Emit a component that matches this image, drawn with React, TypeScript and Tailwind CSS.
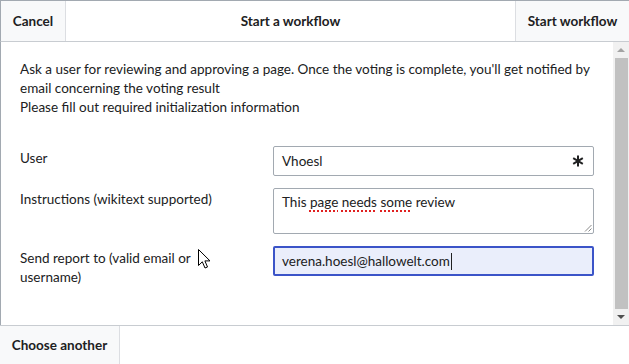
import React from "react";

export default function App() {
  const font = { fontFamily: "Lato, 'Noto Sans', sans-serif" };
  return (
    <div
      className="w-[629px] h-[364px] bg-white text-[13.5px] text-[#202122] flex flex-col overflow-hidden relative"
      style={font}
    >
      {/* header */}
      <div className="h-[42px] flex border-t border-l border-b border-t-[#a2a9b1] border-l-[#a2a9b1] border-b-[#c8ccd1] shrink-0">
        <div className="w-[65px] bg-[#f8f9fa] border-r border-[#dcdee2] flex items-center justify-center font-bold">
          Cancel
        </div>
        <div className="flex-1 flex items-center justify-center font-bold">
          Start a workflow
        </div>
        <div className="w-[114px] bg-[#f8f9fa] border-l border-[#dcdee2] flex items-center justify-center font-bold">
          Start workflow
        </div>
      </div>

      {/* body */}
      <div className="flex-1 flex border-l border-[#a2a9b1] min-h-0">
        <div className="flex-1 pl-[19px] pr-[16px] pt-[18px]">
          <p className="leading-[19px]">
            Ask a user for reviewing and approving a page. Once the voting is complete, you'll get notified by email concerning the voting result
            <br />
            Please fill out required initialization information
          </p>

          <div className="mt-[29px] flex flex-col gap-[12px]">
            <div className="flex">
              <div className="w-[253px] pt-[3px] leading-[19px]">User</div>
              <div className="w-[321px] h-[30px] border border-[#a2a9b1] rounded-[2px] flex items-center pl-[8px] pr-[8px] justify-between">
                <span>Vhoesl</span>
                <svg width="12" height="12" viewBox="0 0 12 12" className="mr-[1px]">
                  <g stroke="#202122" strokeWidth="2" strokeLinecap="butt">
                    <line x1="6" y1="0.5" x2="6" y2="11.5" />
                    <line x1="1.2" y1="3.2" x2="10.8" y2="8.8" />
                    <line x1="1.2" y1="8.8" x2="10.8" y2="3.2" />
                  </g>
                </svg>
              </div>
            </div>
            <div className="flex">
              <div className="w-[253px] pt-[2px] leading-[19px]">Instructions (wikitext supported)</div>
              <div className="w-[321px] h-[46px] border border-[#a2a9b1] rounded-[2px] relative">
                <div className="pl-[8px] pt-[4px] leading-[19px]">
                  This{" "}
                  <span className="underline decoration-dotted decoration-[#e02020] decoration-2 underline-offset-[3px]">page</span>{" "}
                  <span className="underline decoration-dotted decoration-[#e02020] decoration-2 underline-offset-[3px]">needs</span>{" "}
                  <span className="underline decoration-dotted decoration-[#e02020] decoration-2 underline-offset-[3px]">some</span>{" "}
                  review
                </div>
                <svg width="8" height="8" viewBox="0 0 8 8" className="absolute right-[1px] bottom-[1px]">
                  <g stroke="#8a8a8a" strokeWidth="1">
                    <line x1="7.5" y1="1" x2="1" y2="7.5" />
                    <line x1="7.5" y1="4.5" x2="4.5" y2="7.5" />
                  </g>
                </svg>
              </div>
            </div>
            <div className="flex">
              <div className="w-[253px] pt-[3px] leading-[19px]">
                Send report to (valid email or
                <br />
                username)
              </div>
              <div className="w-[321px] h-[30px] border-2 border-[#3b54c8] rounded-[2px] bg-[#eaeefb] flex items-center pl-[7px]">
                <span>verena.hoesl@hallowelt.com</span>
                <span className="w-px h-[17px] bg-[#202122] ml-[1px]" />
              </div>
            </div>
          </div>
        </div>

        {/* scrollbar */}
        <div className="w-[16px] bg-[#f1f1f1] flex flex-col items-center shrink-0">
          <div className="h-[16px] w-full flex items-center justify-center">
            <svg width="8" height="4" viewBox="0 0 8 4">
              <polygon points="0,4 8,4 4,0" fill="#a3a3a3" />
            </svg>
          </div>
          <div className="flex-1 w-[13px] bg-[#c1c1c1]" />
          <div className="h-[16px] w-full flex items-center justify-center">
            <svg width="8" height="4" viewBox="0 0 8 4">
              <polygon points="0,0 8,0 4,4" fill="#505050" />
            </svg>
          </div>
        </div>
      </div>

      {/* footer */}
      <div className="h-[39px] flex border-t border-[#c8ccd1] shrink-0">
        <div className="w-[120px] bg-[#f8f9fa] border-r border-[#dcdee2] flex items-center justify-center font-bold">
          Choose another
        </div>
        <div className="flex-1" />
      </div>

      {/* mouse cursor */}
      <svg width="13" height="21" viewBox="0 0 13 21" className="absolute left-[198px] top-[249px]">
        <path d="M0.5,0.5 L0.5,16.5 L4.3,12.8 L7,19 L9.5,18 L6.9,11.9 L12,11.9 Z" fill="white" stroke="#000" strokeWidth="1" strokeLinejoin="miter" />
      </svg>
    </div>
  );
}
